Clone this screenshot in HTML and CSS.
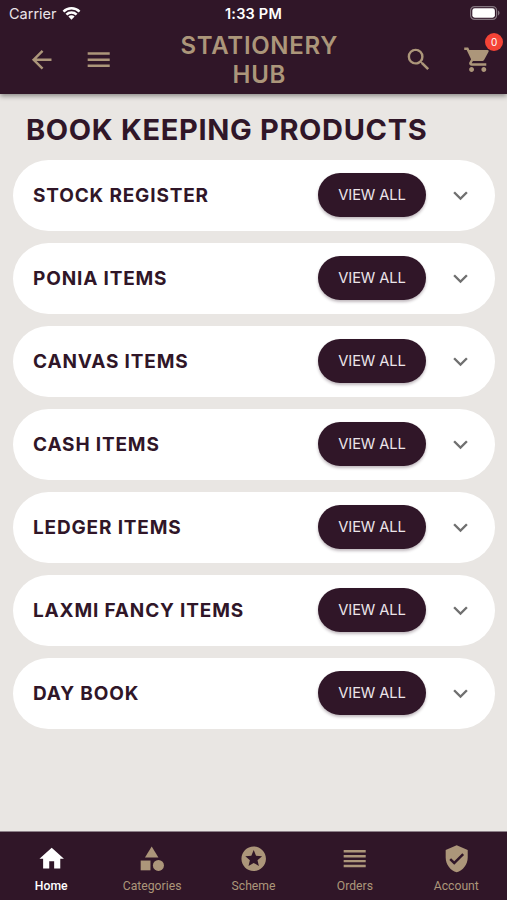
FILE: index.html
```
<!DOCTYPE html>
<html lang="en">
<head>
<meta charset="utf-8">
<title>Stationery Hub</title>
<link rel="stylesheet" href="styles.css">
</head>
<body>
<svg width="0" height="0" class="defs"><symbol id="chevron" viewBox="0 0 24 24"><path d="M16.59 8.59 12 13.17 7.41 8.59 6 10l6 6 6-6z"/></symbol></svg>
<div class="app">
  <header class="header">
    <div class="status">
      <div class="carrier"><span>Carrier</span>
        <svg class="wifi" viewBox="0 0 19 14"><path d="M.6 4.7a12.6 12.6 0 0 1 17.8 0l-1.7 1.8a10.2 10.2 0 0 0-14.4 0z"/><path d="M3.5 7.7a8.5 8.5 0 0 1 12 0l-1.8 1.8a6 6 0 0 0-8.4 0z"/><path d="M6.4 10.6a4.4 4.4 0 0 1 6.2 0L9.5 13.7z"/></svg>
      </div>
      <div class="time">1:33 PM</div>
      <svg class="battery" viewBox="0 0 30 14"><rect x=".6" y=".6" width="26" height="12.8" rx="4" fill="none" stroke="#83757f" stroke-width="1.2"/><rect x="2.3" y="2.3" width="22.6" height="9.4" rx="2.4"/><path d="M28 4.6c2 .8 2 4 0 4.8z" fill="#83757f"/></svg>
    </div>
    <div class="bar">
      <svg class="icon back" viewBox="0 0 24 24"><path d="M20 11H7.83l5.59-5.59L12 4l-8 8 8 8 1.41-1.41L7.83 13H20z"/></svg>
      <svg class="icon menu" viewBox="0 0 24 24"><path d="M3 18h18v-2H3zm0-5h18v-2H3zm0-7v2h18V6z"/></svg>
      <h1 class="title">STATIONERY<br>HUB</h1>
      <svg class="icon search" viewBox="0 0 24 24"><path d="M15.5 14h-.79l-.28-.27A6.47 6.47 0 0 0 16 9.5 6.5 6.5 0 1 0 9.5 16c1.61 0 3.09-.59 4.23-1.57l.27.28v.79l5 4.99L20.49 19zm-6 0C7.01 14 5 11.99 5 9.5S7.01 5 9.5 5 14 7.01 14 9.5 11.99 14 9.5 14z"/></svg>
      <div class="cart">
        <svg class="icon" viewBox="0 0 24 24"><path d="M7 18c-1.1 0-1.99.9-1.99 2S5.9 22 7 22s2-.9 2-2-.9-2-2-2zM1 2v2h2l3.6 7.59-1.35 2.45c-.16.28-.25.61-.25.96 0 1.1.9 2 2 2h12v-2H7.42c-.14 0-.25-.11-.25-.25l.03-.12.9-1.63h7.45c.75 0 1.41-.41 1.75-1.03l3.58-6.49A1 1 0 0 0 20 4H5.21l-.94-2zm16 16c-1.1 0-1.99.9-1.99 2s.89 2 1.99 2 2-.9 2-2-.9-2-2-2z"/></svg>
        <span class="badge">0</span>
      </div>
    </div>
  </header>
  <main class="content">
    <h2 class="heading">BOOK KEEPING PRODUCTS</h2>
    <div class="list">
      <section class="row"><h3>STOCK REGISTER</h3><button>VIEW ALL</button><svg class="chev"><use href="#chevron"/></svg></section>
      <section class="row"><h3>PONIA ITEMS</h3><button>VIEW ALL</button><svg class="chev"><use href="#chevron"/></svg></section>
      <section class="row"><h3>CANVAS ITEMS</h3><button>VIEW ALL</button><svg class="chev"><use href="#chevron"/></svg></section>
      <section class="row"><h3>CASH ITEMS</h3><button>VIEW ALL</button><svg class="chev"><use href="#chevron"/></svg></section>
      <section class="row"><h3>LEDGER ITEMS</h3><button>VIEW ALL</button><svg class="chev"><use href="#chevron"/></svg></section>
      <section class="row"><h3>LAXMI FANCY ITEMS</h3><button>VIEW ALL</button><svg class="chev"><use href="#chevron"/></svg></section>
      <section class="row"><h3>DAY BOOK</h3><button>VIEW ALL</button><svg class="chev"><use href="#chevron"/></svg></section>
    </div>
  </main>
  <nav class="tabs">
    <a class="tab active"><svg class="icon" viewBox="0 0 24 24"><path d="M10 20v-6h4v6h5v-8h3L12 3 2 12h3v8z"/></svg><span>Home</span></a>
    <a class="tab"><svg class="icon" viewBox="0 0 24 24"><path d="m12 2-5.5 9h11z"/><circle cx="17.5" cy="17.5" r="4.5"/><path d="M3 13.500h8v8H3z"/></svg><span>Categories</span></a>
    <a class="tab"><svg class="icon" viewBox="0 0 24 24"><path d="M11.99 2C6.47 2 2 6.480 2 12s4.470 10 9.990 10C17.520 22 22 17.520 22 12S17.520 2 11.990 2zm4.240 16L12 15.450 7.770 18l1.120-4.810-3.730-3.230 4.920-.42L12 5l1.920 4.530 4.920.42-3.730 3.230z"/></svg><span>Scheme</span></a>
    <a class="tab"><svg class="icon" viewBox="0 0 24 24"><path d="M3 15h18v-2H3zm0 4h18v-2H3zm0-8h18V9H3zm0-6v2h18V5z"/></svg><span>Orders</span></a>
    <a class="tab"><svg class="icon" viewBox="0 0 24 24"><path d="M12 1 3 5v6c0 5.550 3.840 10.740 9 12 5.160-1.260 9-6.450 9-12V5zm-2 16-4-4 1.410-1.410L10 14.170l6.590-6.590L18 9z"/></svg><span>Account</span></a>
  </nav>
</div>
</body>
</html>
```
FILE: styles.css
```
* { box-sizing: border-box; margin: 0; }
body { font-family: Inter, "Liberation Sans", sans-serif; color: #301628; }
svg { fill: currentColor; display: block; flex: none; }
.defs { position: absolute; }
.app { height: 900px; display: flex; flex-direction: column; background: #e9e6e3; }
.header { height: 94px; background: #301628; color: #ac967a; box-shadow: 0 2px 5px rgba(0,0,0,.42); z-index: 1; }
.status { height: 27px; display: grid; grid-template-columns: 1fr auto 1fr; align-items: center; padding: 0 7px 0 9px; color: #fff; font-size: 14.500px; line-height: 27px; }
.carrier { display: flex; align-items: center; gap: 5px; color: #eae4e9; }
.wifi { width: 19px; height: 14px; margin-top: -1px; color: #fff; }
.time { font-weight: 600; font-size: 14.5px; letter-spacing: .2px; margin-right: 2px; }
.battery { width: 30px; height: 14px; justify-self: end; margin-top: -1px; }
.bar { height: 66px; display: flex; align-items: center; }
.icon { width: 29.400px; height: 29.400px; }
.back { margin-left: 26.500px; }
.menu { margin-left: 28px; }
.title { width: 200px; margin-left: 46px; text-align: center; font-size: 24px; line-height: 29px; font-weight: 600; letter-spacing: .7px; }
.search { margin-left: 44.500px; }
.cart { position: relative; margin-left: 30px; }
.badge { position: absolute; left: 22px; top: -12px; width: 18px; height: 18px; border-radius: 50%; background: #f44336; color: #fff; font-size: 10px; line-height: 18px; text-align: center; }
.content { flex: 1; padding: 18px 12px 0 13px; }
.heading { padding-left: 13px; height: 36px; line-height: 36px; font-size: 29px; font-weight: 650; letter-spacing: .66px; white-space: nowrap; }
.list { display: grid; gap: 12px; margin-top: 12px; }
.row { height: 71px; border-radius: 36px; background: #fff; display: flex; align-items: center; padding: 0 20px; }
.row h3 { flex: 1; font-size: 19px; font-weight: 750; letter-spacing: .84px; white-space: nowrap; }
.row button { width: 108px; height: 44px; margin-top: -1px; border: 0; border-radius: 22px; background: #301628; color: #ece5ea; font: 14.700px Inter, sans-serif; letter-spacing: -.1px; box-shadow: 0 2px 3px rgba(48,22,40,.3); }
.chev { width: 29px; height: 29px; margin-left: 20px; margin-top: -1px; color: #707070; }
.tabs { height: 69px; background: #301628; color: #ac967a; border-top: 1px solid #8d8089; display: grid; grid-template-columns: repeat(5, 1fr); }
.tab { display: flex; flex-direction: column; align-items: center; padding-top: 12px; font: 12.200px/16px Roboto, sans-serif; letter-spacing: 0; }
.tab span { margin-top: 5px; }
.active { color: #fff; font-weight: 500; padding-left: 1px; }
```
